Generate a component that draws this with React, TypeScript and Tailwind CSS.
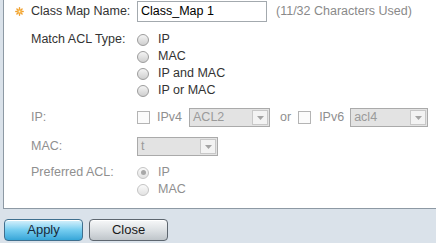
import React from 'react'

function Star() {
  return (
    <svg width="9" height="9" viewBox="0 0 9 9" aria-hidden="true">
      <g stroke="#f0a030" strokeWidth="1.4" strokeLinecap="round">
        <line x1="4.5" y1="0.8" x2="4.5" y2="8.2" />
        <line x1="0.8" y1="4.5" x2="8.2" y2="4.5" />
        <line x1="1.9" y1="1.9" x2="7.1" y2="7.1" />
        <line x1="7.1" y1="1.9" x2="1.9" y2="7.1" />
      </g>
      <circle cx="4.5" cy="4.5" r="2.3" fill="#f6b040" />
      <circle cx="4.5" cy="4.5" r="0.9" fill="#fff3d0" />
    </svg>
  )
}

function Radio({ checked = false, disabled = false }: { checked?: boolean; disabled?: boolean }) {
  return (
    <span
      className={`w-[12px] h-[12px] rounded-full border flex items-center justify-center shrink-0 ${
        disabled
          ? 'border-[#c4c4c4] bg-gradient-to-b from-[#fafafa] to-[#e2e2e2]'
          : 'border-[#9c9c9c] bg-gradient-to-b from-[#f4f4f4] to-[#cfcfcf]'
      }`}
    >
      {checked && <span className="w-[5px] h-[5px] rounded-full bg-[#a8a8a8]" />}
    </span>
  )
}

function Checkbox() {
  return <span className="w-[13px] h-[13px] border border-[#b4b4b4] bg-[#fbfbfb] shrink-0" />
}

function Select({ value, w }: { value: string; w: string }) {
  return (
    <div className={`${w} h-[19px] border border-[#aaaaaa] bg-[#e3e3e3] flex items-stretch shrink-0`}>
      <span className="flex-1 pl-[3px] text-[#9a9a9a] leading-[17px]">{value}</span>
      <span className="w-[16px] m-[1px] border border-[#c8c8c8] bg-[#f3f3f3] flex items-center justify-center">
        <svg width="7" height="4" viewBox="0 0 7 4" aria-hidden="true">
          <path d="M0 0h7L3.5 4z" fill="#a4a4a4" />
        </svg>
      </span>
    </div>
  )
}

function Label({ children, muted = false }: { children: React.ReactNode; muted?: boolean }) {
  return (
    <div className={`w-[106px] shrink-0 ${muted ? 'text-[#8f8f8f]' : 'text-[#333333]'}`}>{children}</div>
  )
}

const ACL_TYPES = ['IP', 'MAC', 'IP and MAC', 'IP or MAC']

export default function App() {
  return (
    <div className="w-[436px] h-[243px] overflow-hidden bg-[#dae2ea] font-['Liberation_Sans',Arial,sans-serif] text-[12.5px]">
      <div className="ml-[3px] h-[209px] bg-white border-l border-b border-[#8d99a4] pt-[1px]">
        {/* Class Map Name */}
        <div className="flex items-center h-[21px]">
          <div className="w-[27px] shrink-0 flex pl-[11px]">
            <Star />
          </div>
          <Label>Class Map Name:</Label>
          <div className="w-[130px] h-[21px] border border-[#a3a9ae] pl-[3px] leading-[19px] text-black">Class_Map 1</div>
          <span className="ml-[9px] text-[#8a8a8a]">(11/32 Characters Used)</span>
        </div>

        {/* Match ACL Type */}
        <div className="flex mt-[9px]">
          <div className="w-[27px] shrink-0" />
          <Label>
            <div className="h-[17px] leading-[17px]">Match ACL Type:</div>
          </Label>
          <div className="flex flex-col">
            {ACL_TYPES.map(t => (
              <div key={t} className="h-[17px] flex items-center gap-[9px] text-[#333333]">
                <Radio />
                <span>{t}</span>
              </div>
            ))}
          </div>
        </div>

        {/* IP */}
        <div className="flex items-center h-[19px] mt-[9px] text-[#8f8f8f]">
          <div className="w-[27px] shrink-0" />
          <Label muted>IP:</Label>
          <Checkbox />
          <span className="ml-[7px] mr-[7px]">IPv4</span>
          <Select value="ACL2" w="w-[81px]" />
          <span className="ml-[10px] mr-[7px]">or</span>
          <Checkbox />
          <span className="ml-[8px] mr-[6px]">IPv6</span>
          <Select value="acl4" w="w-[78px]" />
        </div>

        {/* MAC */}
        <div className="flex items-center h-[19px] mt-[10px]">
          <div className="w-[27px] shrink-0" />
          <Label muted>MAC:</Label>
          <Select value="t" w="w-[81px]" />
        </div>

        {/* Preferred ACL */}
        <div className="flex mt-[8px] text-[#8f8f8f]">
          <div className="w-[27px] shrink-0" />
          <Label muted>
            <div className="h-[17px] leading-[17px]">Preferred ACL:</div>
          </Label>
          <div className="flex flex-col">
            <div className="h-[17px] flex items-center gap-[9px]">
              <Radio checked disabled />
              <span>IP</span>
            </div>
            <div className="h-[17px] flex items-center gap-[9px]">
              <Radio disabled />
              <span>MAC</span>
            </div>
          </div>
        </div>
      </div>

      {/* buttons */}
      <div className="flex gap-[6px] pl-[4px] pt-[10px]">
        <button className="w-[79px] h-[22px] rounded-[4px] border border-[#3f6f8e] bg-gradient-to-b from-[#d8f2fc] via-[#74cdf0] to-[#35a6d8] text-[#1a2a3a] text-[13px] leading-[20px] shadow-[inset_0_1px_0_#ffffff]">
          Apply
        </button>
        <button className="w-[79px] h-[22px] rounded-[4px] border border-[#5d666f] bg-gradient-to-b from-[#f7f8f9] via-[#dde1e4] to-[#bfc5ca] text-[#1a1a1a] text-[13px] leading-[20px] shadow-[inset_0_1px_0_#ffffff]">
          Close
        </button>
      </div>
    </div>
  )
}
